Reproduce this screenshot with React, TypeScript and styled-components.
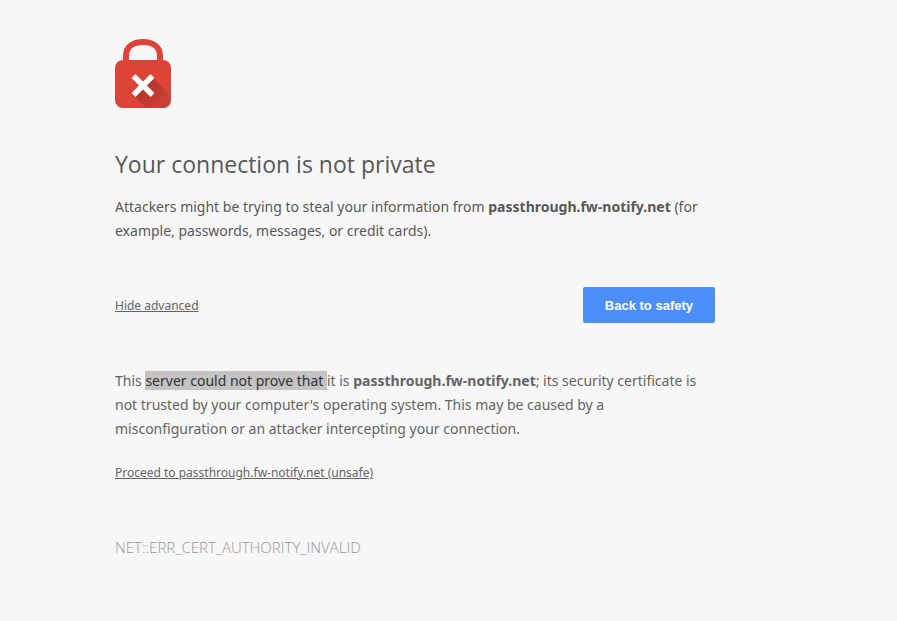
import React from "react";
import styled, { createGlobalStyle } from "styled-components";

const GlobalStyle = createGlobalStyle`
  * { box-sizing: border-box; }
  body {
    margin: 0;
    background: #f7f7f7;
    color: #646464;
    font-family: "Noto Sans", "Open Sans", sans-serif;
    font-size: 14px;
    line-height: 24px;
  }
`;

const Page = styled.main`
  max-width: 715px;
  margin-left: 115px;
  padding: 39px 115px 60px 0;
`;

const LockIcon = styled.svg`
  display: block;
  width: 56px;
  height: 69px;
`;

const Title = styled.h1`
  margin: 40px 0 15px;
  color: #585858;
  font-family: "Open Sans", "Noto Sans", sans-serif;
  font-size: 23px;
  font-weight: 400;
  line-height: 32px;
`;

const Paragraph = styled.p<{ $dark?: boolean }>`
  margin: 0;
  color: ${({ $dark }) => ($dark ? "#585858" : "#646464")};
`;

const Selected = styled.mark`
  background: #c3c3c3;
  color: #323232;
`;

const Actions = styled.div`
  display: flex;
  align-items: center;
  justify-content: space-between;
  margin: 44px 0 46px;
`;

const DetailsButton = styled.button`
  padding: 2px 0 0;
  border: 0;
  background: none;
  color: #646464;
  font: 12px/24px "Noto Sans", "Open Sans", sans-serif;
  text-decoration: underline;
  cursor: pointer;
`;

const SafetyButton = styled.button`
  height: 36px;
  padding: 0 22px;
  border: 0;
  border-radius: 2px;
  background: #4c8efb;
  color: #fff;
  font: 700 13px "Liberation Sans", Arial, sans-serif;
  cursor: pointer;
`;

const ProceedLink = styled.a`
  display: inline-block;
  margin-top: 20px;
  color: #646464;
  font-size: 12px;
`;

const ErrorCode = styled.p`
  margin: 50px 0 0;
  color: #969696;
  font-family: "Open Sans", "Noto Sans", sans-serif;
  font-size: 15px;
  font-weight: 300;
`;

const Lock = () => (
  <LockIcon viewBox="0 0 56 69" aria-hidden="true">
    <defs>
      <linearGradient id="shade" x1="28" y1="44" x2="48" y2="64" gradientUnits="userSpaceOnUse">
        <stop offset="0" stopColor="#b1342b" />
        <stop offset="1" stopColor="#cd4035" />
      </linearGradient>
      <clipPath id="body">
        <rect y="21" width="56" height="48" rx="8" />
      </clipPath>
    </defs>
    <path d="M11 24V17C11 8 18 3 28 3S45 8 45 17V24" fill="none" stroke="#db4437" strokeWidth="6" />
    <rect y="21" width="56" height="48" rx="8" fill="#db4437" />
    <path d="M37 38L60 61V73H35L18 56L28 46Z" fill="url(#shade)" clipPath="url(#body)" />
    <path d="M18.500 37L37.500 56M37.500 37L18.500 56" stroke="#fff" strokeWidth="5.500" />
  </LockIcon>
);

export default function App() {
  return (
    <>
      <GlobalStyle />
      <Page>
        <Lock />
        <Title>Your connection is not private</Title>
        <Paragraph $dark>
          Attackers might be trying to steal your information from{" "}
          <strong>passthrough.fw-notify.net</strong> (for example, passwords, messages, or credit
          cards).
        </Paragraph>
        <Actions>
          <DetailsButton type="button" aria-expanded="true">Hide advanced</DetailsButton>
          <SafetyButton type="button">Back to safety</SafetyButton>
        </Actions>
        <Paragraph>
          This <Selected>server could not prove that </Selected>it is{" "}
          <strong>passthrough.fw-notify.net</strong>; its security certificate is not trusted by
          your computer's operating system. This may be caused by a misconfiguration or an attacker
          intercepting your connection.
        </Paragraph>
        <ProceedLink href="#proceed">Proceed to passthrough.fw-notify.net (unsafe)</ProceedLink>
        <ErrorCode>NET::ERR_CERT_AUTHORITY_INVALID</ErrorCode>
      </Page>
    </>
  );
}
